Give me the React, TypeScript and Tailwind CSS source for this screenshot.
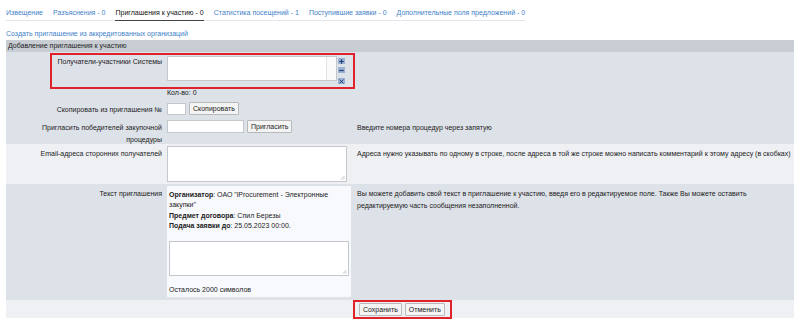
import React from "react";

const tabs = [
  { label: "Извещение" },
  { label: "Разъяснения - 0" },
  { label: "Приглашения к участию - 0", active: true },
  { label: "Статистика посещений - 1" },
  { label: "Поступившие заявки - 0" },
  { label: "Дополнительные поля предложений - 0" },
];

const Btn = ({ children }: { children: React.ReactNode }) => (
  <button className="h-[13px] px-[3px] text-[7px] leading-none text-[#222] bg-[#f4f4f4] border border-[#b9b9b9] rounded-[1px]">
    {children}
  </button>
);

const Row = ({
  label,
  bg,
  h,
  children,
  hint,
}: {
  label?: React.ReactNode;
  bg: string;
  h: string;
  children?: React.ReactNode;
  hint?: React.ReactNode;
}) => (
  <div className={`grid grid-cols-[160px_187px_1fr] ${bg} ${h}`}>
    <div className="text-right pr-[4px] pt-[4px] leading-[12px] text-[#222]">{label}</div>
    <div className="pl-[1px] pt-[2px] text-[#222]">{children}</div>
    <div className="pl-[4px] pt-[4px] leading-[12px] text-[#222]">{hint}</div>
  </div>
);

const IconBtn = ({ children }: { children: React.ReactNode }) => (
  <div className="w-[7px] h-[6px] bg-[#9cb0d2] flex items-center justify-center">
    <svg width="5" height="5" viewBox="0 0 5 5">{children}</svg>
  </div>
);

export default function App() {
  return (
    <div
      className="w-[800px] h-[323px] bg-white text-[7px] text-[#222] overflow-hidden"
      style={{ fontFamily: '"Liberation Sans", Arial, sans-serif' }}
    >
      <div className="pl-[6px]">
        <div className="inline-flex gap-[10px] border-b border-[#e4e6ea] h-[21px] items-end">
          {tabs.map((t) => (
            <div
              key={t.label}
              className={
                t.active
                  ? "pb-[2px] text-[#111] border-b border-[#444] -mb-px"
                  : "pb-[2px] text-[#3f7fc8]"
              }
            >
              {t.label}
            </div>
          ))}
        </div>
        <div className="mt-[8px] text-[#3f7fc8] leading-[10px]">
          Создать приглашение из аккредитованных организаций
        </div>
      </div>

      <div className="relative mx-[6px] mt-[1px]">
        <div className="h-[12px] bg-[#c8ccd3] pl-[2px] leading-[12px] text-[#222]">
          Добавление приглашения к участию
        </div>

        <Row label="Получатели-участники Системы" bg="bg-[#dde1e8]" h="h-[48px]">
          <div className="flex items-start">
            <div className="mt-[2px] w-[170px] h-[25px] bg-white border border-[#c4c7cc] flex justify-end">
              <div className="w-[10px] h-full border-l border-[#e2e4e8] bg-[#fafafa]" />
            </div>
            <div className="ml-[1px] mt-[4px] flex flex-col">
              <IconBtn>
                <path d="M2.5 0.3v4.4M0.3 2.5h4.4" stroke="#1f3f7a" strokeWidth="1.2" />
              </IconBtn>
              <div className="h-[3px]" />
              <IconBtn>
                <path d="M0.3 2.5h4.4" stroke="#1f3f7a" strokeWidth="1.2" />
              </IconBtn>
              <div className="h-[5px]" />
              <IconBtn>
                <path d="M0.6 0.6l3.8 3.8M4.4 0.6l-3.8 3.8" stroke="#1f3f7a" strokeWidth="1" />
              </IconBtn>
            </div>
          </div>
          <div className="mt-[4px] leading-[10px]">Кол-во: 0</div>
        </Row>

        <Row label="Скопировать из приглашения №" bg="bg-[#dde1e8]" h="h-[18px]">
          <div className="flex gap-[3px] items-center">
            <div className="w-[19px] h-[12px] bg-white border border-[#c4c7cc]" />
            <Btn>Скопировать</Btn>
          </div>
        </Row>

        <Row
          label={
            <>
              Пригласить победителей закупочной
              <br />
              процедуры
            </>
          }
          bg="bg-[#dde1e8]"
          h="h-[26px]"
          hint="Введите номера процедур через запятую"
        >
          <div className="flex gap-[3px] items-center">
            <div className="w-[77px] h-[13px] bg-white border border-[#c4c7cc]" />
            <Btn>Пригласить</Btn>
          </div>
        </Row>

        <Row
          label="Email-адреса сторонних получателей"
          bg="bg-[#eef0f4]"
          h="h-[40px]"
          hint="Адреса нужно указывать по одному в строке, после адреса в той же строке можно написать комментарий к этому адресу (в скобках)"
        >
          <div className="relative w-[180px] h-[36px] bg-white border border-[#c4c7cc]">
            <svg className="absolute right-[1px] bottom-[1px]" width="5" height="5" viewBox="0 0 5 5">
              <path d="M4.5 1L1 4.5M4.5 3L3 4.5" stroke="#999" strokeWidth="0.6" />
            </svg>
          </div>
        </Row>

        <Row
          label="Текст приглашения"
          bg="bg-[#dde1e8]"
          h="h-[116px]"
          hint={
            <>
              Вы можете добавить свой текст в приглашение к участию, введя его в редактируемое поле. Также Вы можете оставить
              <br />
              редактируемую часть сообщения незаполненной.
            </>
          }
        >
          <div className="w-[184px] h-[111px] bg-[#f8f9fc] px-[2px] pt-[4px] leading-[10.4px] text-[#222]">
            <div>
              <b>Организатор</b>: ОАО "iProcurement - Электронные
              <br />
              закупки"
            </div>
            <div>
              <b>Предмет договора</b>: Спил Березы
            </div>
            <div>
              <b>Подача заявки до</b>: <span className="text-[#222]">25.05.2023 00:00.</span>
            </div>
            <div className="relative mt-[9px] w-[180px] h-[35px] bg-white border border-[#c4c7cc]">
              <svg className="absolute right-[1px] bottom-[1px]" width="5" height="5" viewBox="0 0 5 5">
                <path d="M4.5 1L1 4.5M4.5 3L3 4.5" stroke="#999" strokeWidth="0.6" />
              </svg>
            </div>
            <div className="mt-[9px]">Осталось 2000 символов</div>
          </div>
        </Row>

        <div className="h-[18px] bg-[#eef0f4] grid grid-cols-[347px_1fr]">
          <div />
          <div className="flex gap-[3px] items-center pl-[6px]">
            <Btn>Сохранить</Btn>
            <Btn>Отменить</Btn>
          </div>
        </div>

        <div className="absolute left-[44px] top-[13px] w-[305px] h-[36px] border-2 border-[#e0232b] pointer-events-none" />
        <div className="absolute left-[347px] top-[260px] w-[99px] h-[19px] border-2 border-[#e0232b] pointer-events-none" />
      </div>
    </div>
  );
}
